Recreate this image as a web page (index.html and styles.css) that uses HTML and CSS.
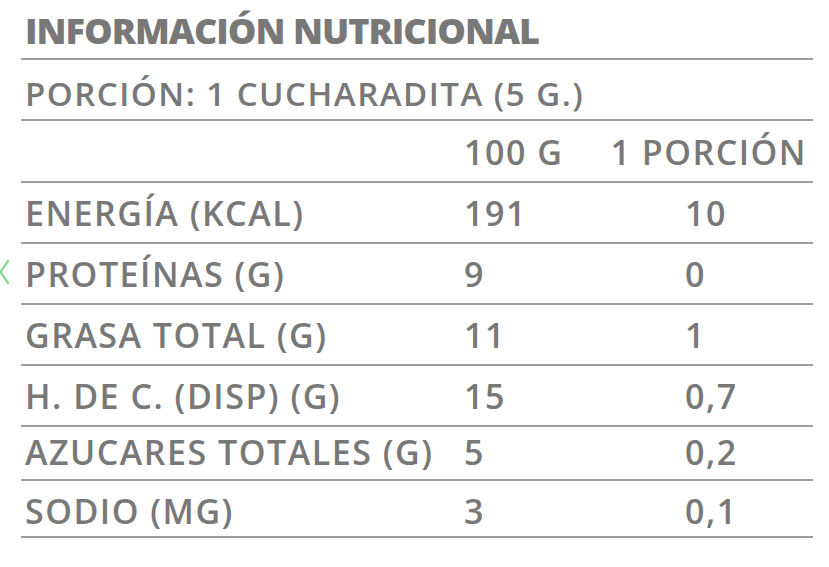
FILE: index.html
```html
<!DOCTYPE html>
<html lang="es">
<head>
<meta charset="utf-8">
<title>Información nutricional</title>
<link rel="stylesheet" href="styles.css">
</head>
<body>
<div class="page">
  <svg class="prev" width="12" height="28" viewBox="0 0 12 28" aria-hidden="true">
    <polyline points="9,3 1.5,14 9,25" fill="none" stroke="#74da88" stroke-width="2.2" stroke-linecap="round" stroke-linejoin="round"/>
  </svg>
  <section class="nutri">
    <h2 class="title">INFORMACIÓN NUTRICIONAL</h2>
    <div class="portion">PORCIÓN: 1 CUCHARADITA (5 G.)</div>
    <div class="row head">
      <span></span>
      <span>100 G</span>
      <span class="per">1 PORCIÓN</span>
    </div>
    <div class="row"><span>ENERGÍA (KCAL)</span><span>191</span><span>10</span></div>
    <div class="row"><span>PROTEÍNAS (G)</span><span>9</span><span>0</span></div>
    <div class="row"><span>GRASA TOTAL (G)</span><span>11</span><span>1</span></div>
    <div class="row"><span>H. DE C. (DISP) (G)</span><span>15</span><span>0,7</span></div>
    <div class="row short"><span>AZUCARES TOTALES (G)</span><span>5</span><span>0,2</span></div>
    <div class="row last"><span>SODIO (MG)</span><span>3</span><span>0,1</span></div>
  </section>
</div>
</body>
</html>
```
FILE: styles.css
```css
html, body {
  margin: 0;
  padding: 0;
  background: #ffffff;
}

.page {
  position: relative;
  width: 829px;
  height: 567px;
}

.prev {
  position: absolute;
  left: -1px;
  top: 258px;
}

.nutri {
  margin-left: 21px;
  width: 792px;
  font-family: "Open Sans", "Liberation Sans", sans-serif;
  color: #787878;
}

.title {
  margin: 0;
  height: 60px;
  display: flex;
  align-items: flex-end;
  padding: 0 0 9px 4px;
  box-sizing: border-box;
  font-size: 36px;
  font-weight: 800;
  line-height: 1;
  letter-spacing: -1px;
  border-bottom: 2px solid #9c9c9c;
}

.portion {
  height: 61px;
  display: flex;
  align-items: flex-end;
  padding: 0 0 9px 4px;
  box-sizing: border-box;
  font-size: 33px;
  font-weight: 600;
  line-height: 1;
  letter-spacing: 1.5px;
  border-bottom: 2px solid #9c9c9c;
}

.row {
  display: grid;
  grid-template-columns: 439px 221px 1fr;
  align-items: end;
  height: 61px;
  padding: 0 0 12px 4px;
  box-sizing: border-box;
  font-size: 34px;
  font-weight: 600;
  line-height: 1;
  letter-spacing: 1.5px;
  white-space: nowrap;
  border-bottom: 2px solid #9c9c9c;
}

.row.head {
  height: 62px;
  grid-template-columns: 439px 1fr auto;
  padding-right: 6px;
}

.row.short {
  height: 54px;
  padding-bottom: 10px;
}

.row.last {
  height: 57px;
  padding-bottom: 8px;
}
```
